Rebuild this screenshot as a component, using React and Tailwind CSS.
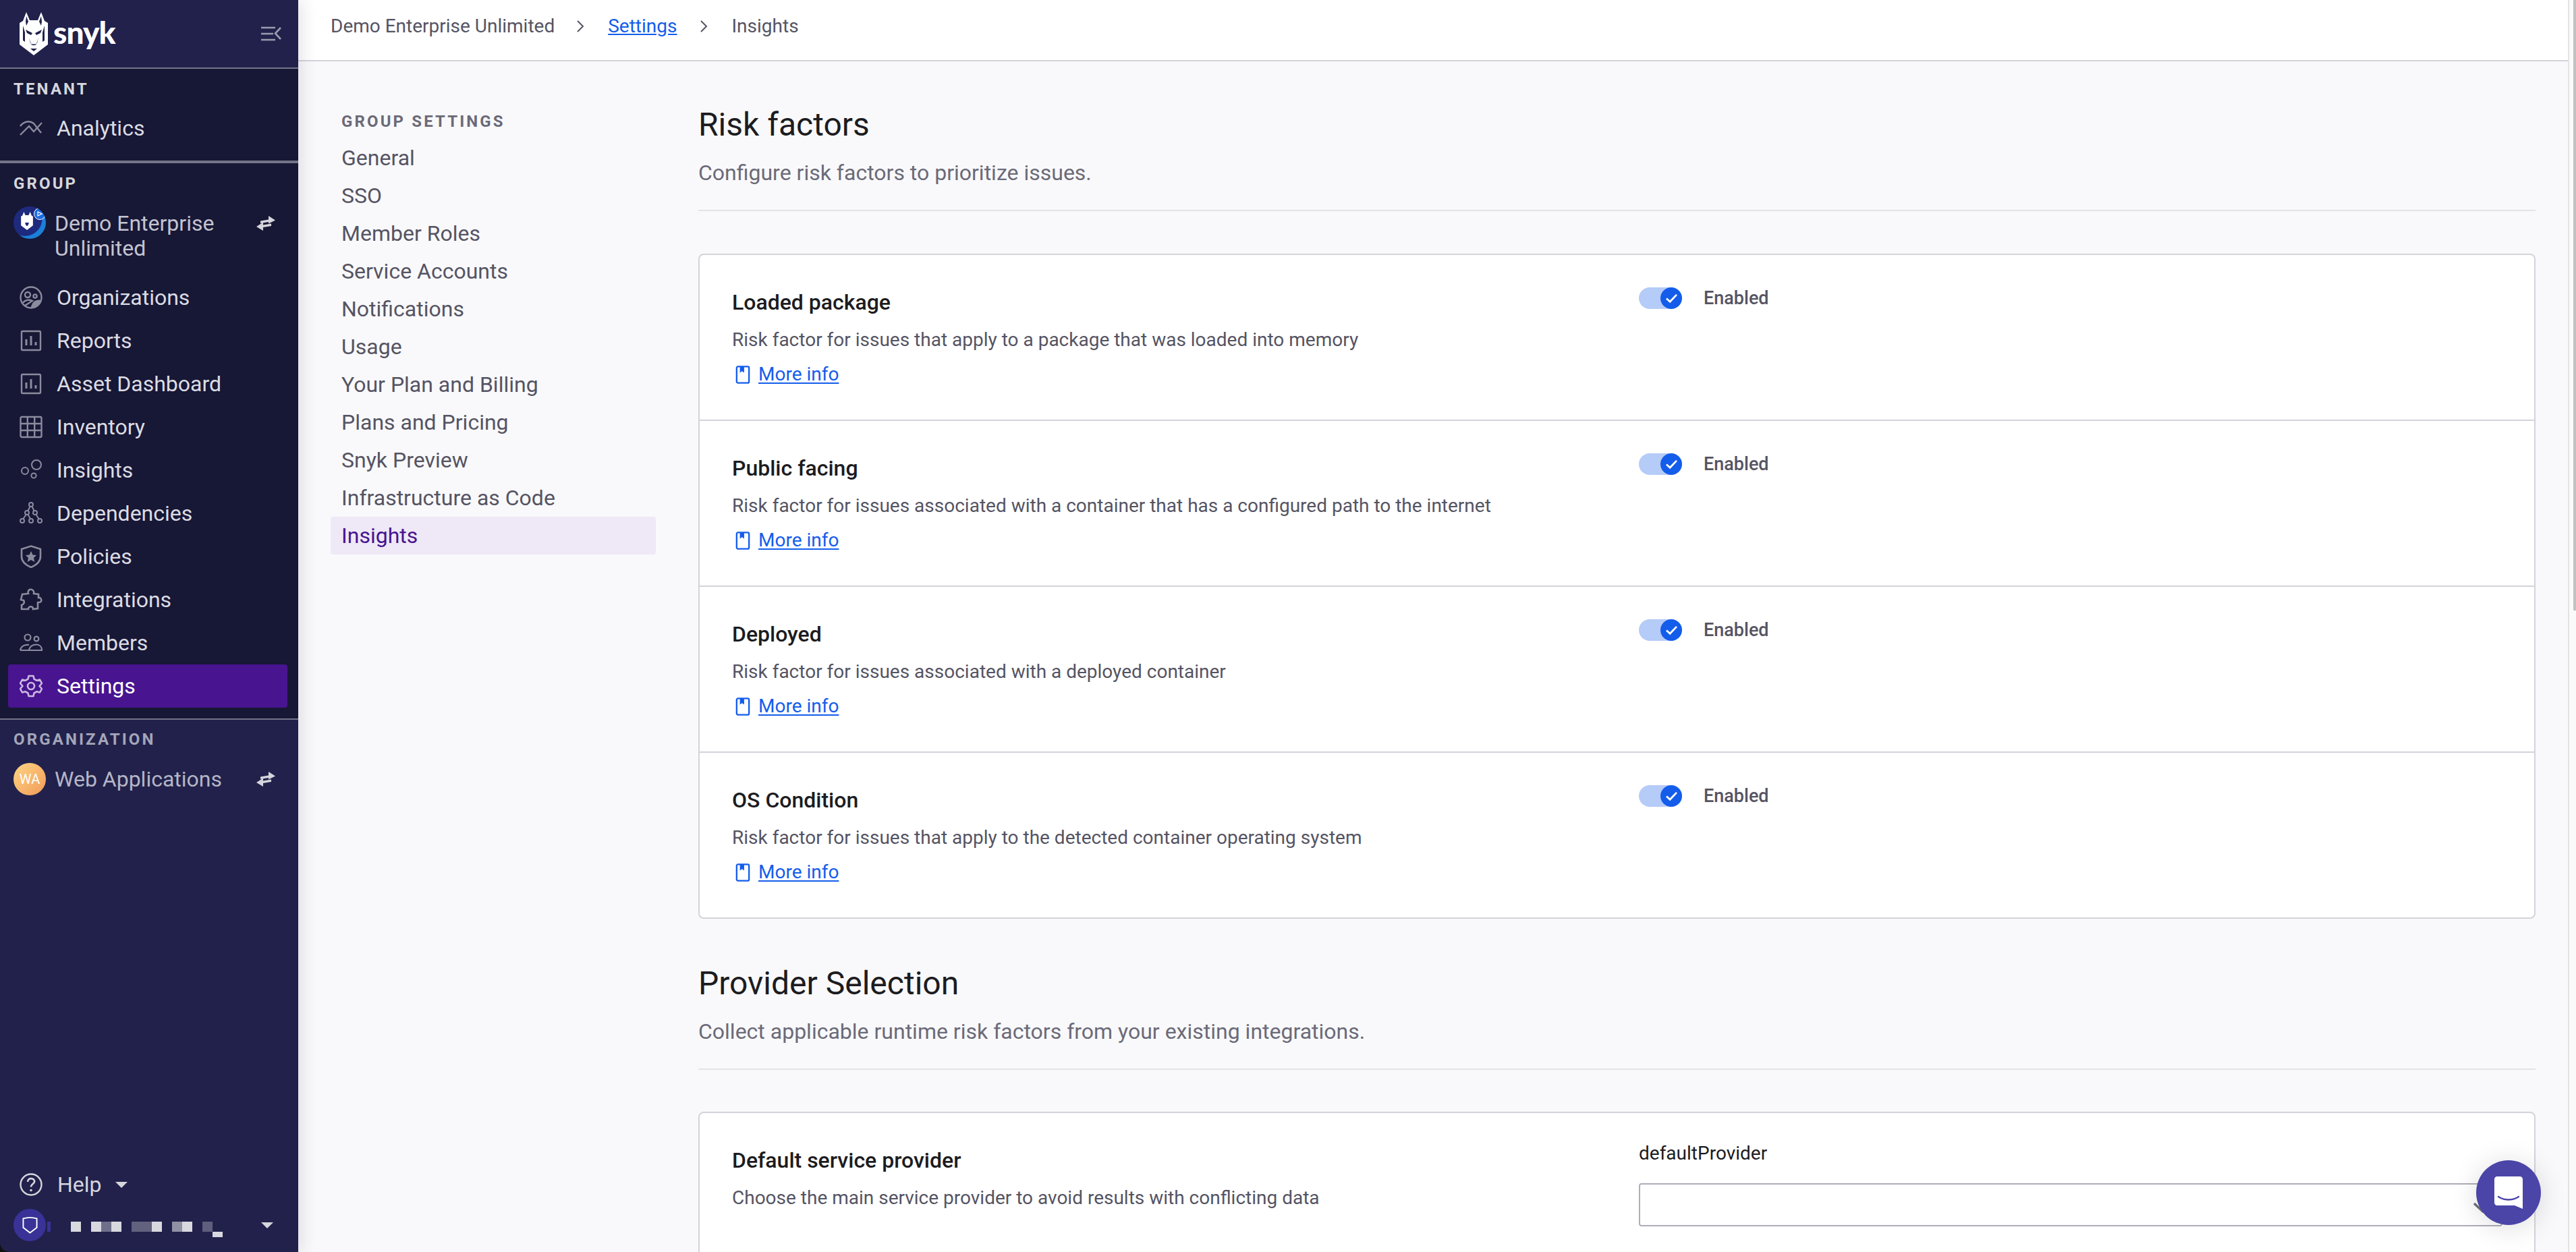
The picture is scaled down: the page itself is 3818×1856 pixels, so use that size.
import React from "react";

const groupNav = [
  { label: "Organizations", icon: "org" },
  { label: "Reports", icon: "report" },
  { label: "Asset Dashboard", icon: "report" },
  { label: "Inventory", icon: "grid" },
  { label: "Insights", icon: "insights" },
  { label: "Dependencies", icon: "deps" },
  { label: "Policies", icon: "policy" },
  { label: "Integrations", icon: "puzzle" },
  { label: "Members", icon: "members" },
  { label: "Settings", icon: "gear", active: true },
];

const settingsNav = [
  "General",
  "SSO",
  "Member Roles",
  "Service Accounts",
  "Notifications",
  "Usage",
  "Your Plan and Billing",
  "Plans and Pricing",
  "Snyk Preview",
  "Infrastructure as Code",
];

const riskFactors = [
  { title: "Loaded package", text: "Risk factor for issues that apply to a package that was loaded into memory" },
  { title: "Public facing", text: "Risk factor for issues associated with a container that has a configured path to the internet" },
  { title: "Deployed", text: "Risk factor for issues associated with a deployed container" },
  { title: "OS Condition", text: "Risk factor for issues that apply to the detected container operating system" },
];

function NavIcon({ name, className }) {
  const common = { viewBox: "0 0 34 34", fill: "none", stroke: "currentColor", strokeWidth: 2.4, className };
  if (name === "analytics")
    return (
      <svg {...common}>
        <path d="M1 27 L14 14 L21 22 L33 9" />
        <path d="M1 14 C6 7 15 5 21 10 L32 24" />
      </svg>
    );
  if (name === "org")
    return (
      <svg {...common}>
        <circle cx="17" cy="17" r="15.5" />
        <circle cx="12" cy="13" r="4" />
        <circle cx="23" cy="15" r="2.6" />
        <path d="M5 25 C8 20 15 20 19 22 L8 29" />
        <path d="M18 31 C20 24 25 21 31 22 C30 27 25 31 18 31Z" fill="currentColor" />
      </svg>
    );
  if (name === "report")
    return (
      <svg {...common}>
        <rect x="3" y="3" width="28" height="28" rx="1.5" />
        <path d="M10 24 V15 M17 24 V10 M24 24 V19" strokeWidth="3" />
      </svg>
    );
  if (name === "grid")
    return (
      <svg {...common}>
        <rect x="1.5" y="2" width="31" height="30" rx="2" />
        <path d="M1.5 12 H32.5 M1.5 22 H32.5 M11.8 2 V32 M22.2 2 V32" />
      </svg>
    );
  if (name === "insights")
    return (
      <svg {...common} strokeWidth="2">
        <circle cx="25" cy="9" r="7" />
        <circle cx="8" cy="18" r="5" />
        <circle cx="21" cy="25" r="3.6" />
      </svg>
    );
  if (name === "deps")
    return (
      <svg {...common} strokeWidth="2">
        <circle cx="17" cy="4" r="3" />
        <circle cx="11" cy="16" r="3" />
        <circle cx="23" cy="16" r="3" />
        <circle cx="4" cy="28" r="3" />
        <circle cx="17" cy="28" r="3" />
        <circle cx="30" cy="28" r="3" />
        <path d="M15.5 7 L12.5 13 M18.5 7 L21.5 13 M9.5 19 L5.5 25 M12.5 19 L16 25 M24.5 19 L28.5 25" />
      </svg>
    );
  if (name === "policy")
    return (
      <svg {...common} strokeWidth="2.6">
        <path d="M17 1.5 L31 6 V17 C31 25 24 30 17 33 C10 30 3 25 3 17 V6 Z" />
        <path d="M17 9 L19.5 14.5 L25 15 L21 19 L22.3 25 L17 22 L11.7 25 L13 19 L9 15 L14.5 14.5 Z" fill="currentColor" stroke="none" />
      </svg>
    );
  if (name === "puzzle")
    return (
      <svg {...common} strokeWidth="2.6">
        <path d="M15 2 C19 1 22 4 21 8 L28 9 L28 14 C33 13 34 21 29 21 L27 21 L27 30 L20 31 C20 26 13 26 13 31 L3 31 L3 25 C6 24 8 21 6 18 L2 17 L4 9 L13 8 C12 6 13 3 15 2Z" />
      </svg>
    );
  if (name === "members")
    return (
      <svg {...common} strokeWidth="2.2">
        <circle cx="12" cy="9" r="4.5" />
        <circle cx="25" cy="11" r="3.4" />
        <path d="M1 28 C2 22 8 19 14 20 M1 28 H13" />
        <path d="M14 28 C15 22 20 19.5 25 19.5 C30 19.5 33 23 33 28 Z" />
      </svg>
    );
  if (name === "gear")
    return (
      <svg {...common} strokeWidth="2.6">
        <path d="M13.5 2 H20.5 L21.5 6.5 L25.5 8.8 L30 7.5 L33 13 L29.5 17 L33 21 L30 26.5 L25.5 25.2 L21.5 27.5 L20.5 32 H13.5 L12.5 27.5 L8.5 25.2 L4 26.5 L1 21 L4.5 17 L1 13 L4 7.5 L8.5 8.8 L12.5 6.5 Z" strokeLinejoin="round" />
        <circle cx="17" cy="17" r="5" />
      </svg>
    );
  return (
    <svg {...common}>
      <circle cx="17" cy="17" r="15.5" />
      <path d="M12 13 C12 6 23 7 22 13 C21.5 16 17 16.5 17 20.5" strokeWidth="2.6" />
      <circle cx="17" cy="25.5" r="1.8" fill="currentColor" stroke="none" />
    </svg>
  );
}

function SwapIcon() {
  return (
    <svg viewBox="0 0 28 22" className="w-[28px] h-[22px] text-[#d5d5dc] ml-auto mr-[34px] shrink-0" fill="currentColor">
      <path d="M6 7.5 L18 5.5 V0 L28 6.5 L18 11.5 V9 L6 11 Z" />
      <path d="M22 11.5 L10 13.5 V9.5 L0 16 L10 22 V17 L22 15 Z" />
    </svg>
  );
}

function SnykDog() {
  return (
    <svg viewBox="0 0 42 64" className="w-[42px] h-[64px] shrink-0">
      <path d="M0 16 L5 13 L10 0 L15 12 H27 L32 0 L37 13 L42 16 V48 L21 64 L0 48 Z" fill="#fff" />
      <path d="M9 14 L10 6 L13 14 L10 20 Z M33 14 L32 6 L29 14 L32 20 Z" fill="#21214c" />
      <path d="M5 20 L8 30 L8 44 L5 42 Z M37 20 L34 30 L34 44 L37 42 Z" fill="#21214c" />
      <path d="M9 26 L19 31 L17 34 L11 31 Z M33 26 L23 31 L25 34 L31 31 Z" fill="#21214c" />
      <path d="M14 38 L17 47 C18 50 24 50 25 47 L28 38 L26 46 C24 48 18 48 16 46 Z" fill="#21214c" />
      <path d="M16 54 H26 L21 58 Z" fill="#21214c" />
    </svg>
  );
}

function RedactedName() {
  // pixelated account name
  const cells = [
    [35, "#d8d8df"],
    [65, "#d8d8df"],
    [80, "#6f6f8b"],
    [95, "#d8d8df"],
    [125, "#62627f"],
    [140, "#62627f"],
    [155, "#d8d8df"],
    [185, "#9191a5"],
    [200, "#d8d8df"],
    [230, "#5f5f7d"],
  ];
  return (
    <svg viewBox="0 0 265 24" className="w-[265px] h-[24px] ml-[2px]">
      <rect x="0" y="0" width="5" height="15" fill="#3a3296" />
      {cells.map(([x, c]) => (
        <rect key={x} x={x} y="0" width="15" height="15" fill={c} />
      ))}
      <rect x="245" y="15" width="15" height="8" fill="#d8d8df" />
    </svg>
  );
}

function SectionLabel({ children, className = "" }) {
  return (
    <div className={"text-[24px] leading-[28px] font-bold tracking-[0.13em] pl-[20px] " + className}>{children}</div>
  );
}

function NavRow({ item }) {
  return (
    <div
      className={
        "ml-[12px] mr-[16px] h-[64px] flex items-center pl-[17px] rounded-[4px] text-[32px] " +
        (item.active ? "bg-[#481490] text-white" : "text-[#dcdce3]")
      }
    >
      <NavIcon
        name={item.icon}
        className={"w-[34px] h-[34px] shrink-0 " + (item.active ? "text-[#c9b8e0]" : "text-[#8b8b9e]")}
      />
      <span className="ml-[21px]">{item.label}</span>
    </div>
  );
}

function Sidebar() {
  return (
    <aside className="w-[442px] shrink-0 h-full bg-[#21214c] flex flex-col rounded-bl-[14px] overflow-hidden relative z-10 shadow-[4px_0_24px_rgba(40,40,80,0.14)]">
      <div className="h-[102px] shrink-0 border-b-2 border-[#74748a] flex items-center pl-[29px] pr-[25px]">
        <SnykDog />
        <span className="ml-[8px] text-white text-[46px] font-black [font-family:Lato,sans-serif] tracking-[-0.02em] leading-none mb-[4px]">
          snyk
        </span>
        <svg viewBox="0 0 30 22" className="w-[30px] h-[22px] ml-auto text-[#9c9cae]" fill="none" stroke="currentColor" strokeWidth="2.6">
          <path d="M0 2 H21 M0 11 H18 M0 20 H21 M29 2 L21 10.5 L29 19" />
        </svg>
      </div>
      <div className="h-[140px] shrink-0 bg-[#171736] border-b-4 border-[#74748a] pt-[16px]">
        <SectionLabel className="text-[#d6d6dc]">TENANT</SectionLabel>
        <div className="mt-[12px]">
          <NavRow item={{ label: "Analytics", icon: "analytics" }} />
        </div>
      </div>
      <div className="h-[825px] shrink-0 bg-[#171736] border-b-2 border-[#74748a] pt-[16px]">
        <SectionLabel className="text-[#d6d6dc]">GROUP</SectionLabel>
        <div className="flex items-start pl-[20px] mt-[20px] h-[103px]">
          <div className="w-[48px] h-[48px] rounded-full shrink-0 bg-[radial-gradient(circle_at_35%_38%,#1e2a7e_58%,#1c7fd8_61%)] flex items-center justify-center relative overflow-hidden">
            <svg viewBox="0 0 42 64" className="w-[18px] h-[27px] mr-[8px] mb-[6px]">
              <path d="M0 16 L5 13 L10 0 L15 12 H27 L32 0 L37 13 L42 16 V48 L21 64 L0 48 Z" fill="#fff" />
              <path d="M14 38 L17 47 C18 50 24 50 25 47 L28 38 Z" fill="#1e2a7e" />
            </svg>
            <span className="absolute right-0 top-[2px] w-[18px] h-[18px] rounded-full bg-[#1c6be0] border border-white flex items-center justify-center">
              <svg viewBox="0 0 8 8" className="w-[8px] h-[8px]" fill="none" stroke="#fff" strokeWidth="1.2">
                <path d="M1 1 L7 4 L1 7 Z" />
              </svg>
            </span>
          </div>
          <div className="ml-[13px] mt-[7px] text-[32px] leading-[37px] text-[#c4c4d0] w-[250px]">Demo Enterprise Unlimited</div>
          <div className="pt-[14px] ml-auto">
            <SwapIcon />
          </div>
        </div>
        {groupNav.map((item) => (
          <NavRow key={item.label} item={item} />
        ))}
      </div>
      <div className="pt-[15px]">
        <SectionLabel className="text-[#a5a5b8]">ORGANIZATION</SectionLabel>
        <div className="flex items-center pl-[20px] mt-[21px]">
          <div className="w-[48px] h-[48px] rounded-full shrink-0 bg-gradient-to-br from-[#fdd584] to-[#f19a58] flex items-center justify-center text-white text-[20px]">
            WA
          </div>
          <div className="ml-[13px] text-[32px] text-[#b5b5c5] whitespace-nowrap">Web Applications</div>
          <SwapIcon />
        </div>
      </div>
      <div className="mt-auto pb-[16px]">
        <div className="flex items-center pl-[29px] h-[48px] text-[32px] text-[#d5d5dc]">
          <NavIcon name="help" className="w-[34px] h-[34px]" />
          <span className="ml-[22px]">Help</span>
          <span className="ml-[20px] w-0 h-0 border-x-[9px] border-x-transparent border-t-[9px] border-t-[#d5d5dc]" />
        </div>
        <div className="flex items-center pl-[20px] mt-[12px] h-[48px]">
          <div className="w-[48px] h-[48px] rounded-full bg-[#3a3296] flex items-center justify-center shrink-0">
            <svg viewBox="0 0 24 26" className="w-[23px] h-[26px]" fill="none" stroke="#fff" strokeWidth="2">
              <path d="M1.5 3 C8 1 16 1 22.5 3 V17 L12 25 L1.5 17 Z" />
            </svg>
          </div>
          <div className="self-start mt-[19px]">
            <RedactedName />
          </div>
          <span className="ml-auto mr-[37px] w-0 h-0 border-x-[9px] border-x-transparent border-t-[9px] border-t-[#d5d5dc]" />
        </div>
      </div>
    </aside>
  );
}

function Toggle() {
  return (
    <div className="flex items-center self-start">
      <div className="w-[64px] h-[32px] rounded-full bg-[#b5cbf8] flex justify-end">
        <div className="w-[32px] h-[32px] rounded-full bg-[#145deb] flex items-center justify-center">
          <svg viewBox="0 0 20 16" className="w-[19px] h-[15px]" fill="none" stroke="#fff" strokeWidth="3">
            <path d="M2 8 L7.5 13 L18 2" />
          </svg>
        </div>
      </div>
      <span className="ml-[32px] text-[27px] leading-[32px] font-medium text-[#555463]">Enabled</span>
    </div>
  );
}

function RiskRow({ item, last }) {
  return (
    <div className={"flex pl-[48px] pt-[48px] " + (last ? "h-[244px]" : "h-[246px] border-b-2 border-[#d3d3da]")}>
      <div className="w-[1344px] shrink-0">
        <div className="text-[32px] leading-[44px] font-medium text-[#1c1c21]">{item.title}</div>
        <div className="text-[28px] leading-[36px] mt-[16px] text-[#555463]">{item.text}</div>
        <div className="flex items-center mt-[15px] h-[36px]">
          <svg viewBox="0 0 22 28" className="w-[22px] h-[27px] ml-[5px]" fill="none" stroke="#145deb" strokeWidth="2.4">
            <rect x="1.5" y="1.5" width="19" height="25" rx="2" />
            <path d="M6.5 1.5 H13 V11 L9.8 8.5 L6.5 11 Z" fill="#145deb" stroke="none" />
          </svg>
          <a className="ml-[12px] text-[28px] text-[#145deb] underline underline-offset-[3px]">More info</a>
        </div>
      </div>
      <Toggle />
    </div>
  );
}

function SectionHead({ title, text }) {
  return (
    <div className="border-b-2 border-[#e3e3e8]">
      <h2 className="text-[48px] leading-[60px] text-[#1c1c21]">{title}</h2>
      <p className="text-[32px] leading-[40px] mt-[21px] mb-[35px] text-[#6b6a78]">{text}</p>
    </div>
  );
}

function Chevron({ className }) {
  return (
    <svg viewBox="0 0 12 20" className={"w-[12px] h-[20px] " + className} fill="none" stroke="#555463" strokeWidth="2">
      <path d="M2 2 L10 10 L2 18" />
    </svg>
  );
}

export default function App() {
  return (
    <div className="w-[3818px] h-[1856px] flex overflow-hidden bg-[#111] [font-family:Roboto,sans-serif]">
      <Sidebar />
      <main className="flex-1 h-full flex flex-col bg-[#f9f9fb] relative overflow-hidden">
        <header className="h-[91px] shrink-0 bg-white border-b-2 border-[#d3d3da] flex items-center pl-[48px] pb-[12px] text-[28px] text-[#555463]">
          <span>Demo Enterprise Unlimited</span>
          <Chevron className="ml-[32px] mr-[35px]" />
          <a className="text-[#145deb] underline">Settings</a>
          <Chevron className="ml-[34px] mr-[35px]" />
          <span>Insights</span>
        </header>
        <div className="flex-1 flex min-h-0">
          <nav className="w-[482px] ml-[48px] shrink-0 pt-[73px]">
            <div className="pl-[16px] text-[24px] leading-[32px] font-bold tracking-[0.13em] text-[#6b6a78]">GROUP SETTINGS</div>
            <div className="mt-[10px] text-[32px] text-[#555463]">
              {settingsNav.map((label) => (
                <div key={label} className="h-[56px] flex items-center pl-[16px]">
                  {label}
                </div>
              ))}
              <div className="h-[56px] flex items-center pl-[16px] bg-[#efe8f6] rounded-[4px] text-[#481490]">Insights</div>
            </div>
          </nav>
          <div className="ml-[63px] w-[2723px] shrink-0 pt-[64px]">
            <SectionHead title="Risk factors" text="Configure risk factors to prioritize issues." />
            <div className="mt-[63px] bg-white border-2 border-[#d3d3da] rounded-[8px]">
              {riskFactors.map((item, i) => (
                <RiskRow key={item.title} item={item} last={i === riskFactors.length - 1} />
              ))}
            </div>
            <div className="mt-[66px]">
              <SectionHead title="Provider Selection" text="Collect applicable runtime risk factors from your existing integrations." />
            </div>
            <div className="mt-[62px] h-[400px] bg-white border-2 border-[#d3d3da] rounded-[8px] flex pl-[48px] pt-[48px]">
              <div className="w-[1344px] shrink-0">
                <div className="text-[32px] leading-[44px] font-medium text-[#1c1c21]">Default service provider</div>
                <div className="text-[28px] leading-[36px] mt-[16px] text-[#555463]">Choose the main service provider to avoid results with conflicting data</div>
              </div>
              <div className="w-[1280px] shrink-0">
                <div className="text-[28px] leading-[36px] text-[#1c1c21] -mt-[6px]">defaultProvider</div>
                <div className="mt-[26px] h-[64px] bg-white border-2 border-[#aeadba] rounded-[4px] flex items-center justify-end pr-[12px]">
                  <svg viewBox="0 0 30 16" className="w-[30px] h-[16px] mt-[8px]" fill="none" stroke="#6f6e7c" strokeWidth="3.5">
                    <path d="M2 2 L15 14 L28 2" />
                  </svg>
                </div>
              </div>
            </div>
          </div>
        </div>
        <button className="absolute left-[3228px] top-[1720px] w-[96px] h-[96px] rounded-full bg-[#4b45a8] flex items-center justify-center shadow-[0_4px_40px_rgba(0,0,0,0.14)]">
          <svg viewBox="0 0 42 48" className="w-[42px] h-[48px]">
            <path d="M4 0 H38 C40 0 42 2 42 4 V48 L30 43 H4 C2 43 0 41 0 39 V4 C0 2 2 0 4 0Z" fill="#fff" />
            <path d="M6 30 C15 36 27 36 36 30" fill="none" stroke="#4b45a8" strokeWidth="2.4" strokeLinecap="round" />
          </svg>
        </button>
      </main>
      <div className="w-[12px] shrink-0 h-full bg-[#fafafa] border-l-2 border-[#e3e3e3] flex justify-end">
        <div className="w-[4px] h-[905px] bg-[#c1c1c1]" />
      </div>
    </div>
  );
}
